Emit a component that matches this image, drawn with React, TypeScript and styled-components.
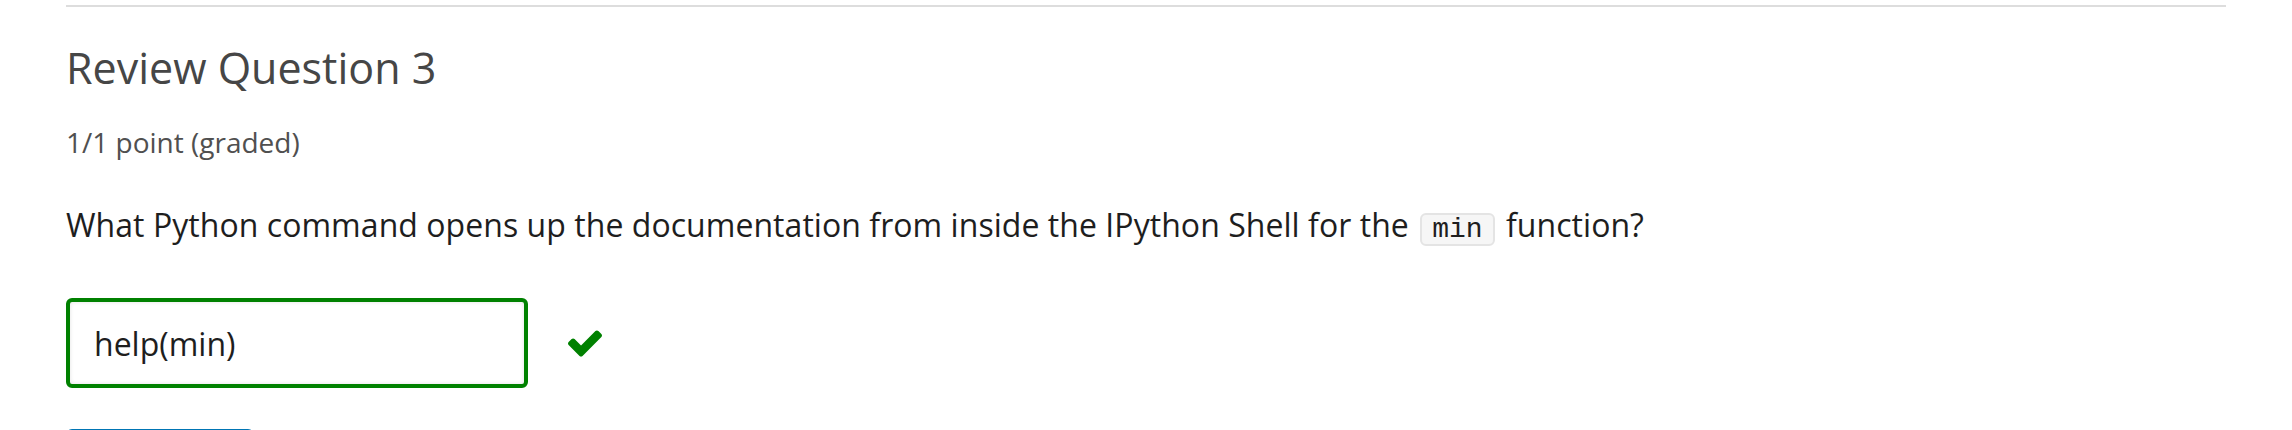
import React from "react";
import styled, { createGlobalStyle } from "styled-components";

const GlobalStyle = createGlobalStyle`
  html, body {
    margin: 0;
    padding: 0;
    background: #fff;
    overflow: hidden;
  }
  body {
    font-family: "Open Sans", "Noto Sans", sans-serif;
  }
`;

const Problem = styled.section`
  width: 2160px;
  margin: 5px 0 0 66px;
  border-top: 2px solid #dddddd;
`;

const Heading = styled.h3`
  margin: 36px 0 0;
  font-size: 43px;
  line-height: 50px;
  font-weight: 400;
  color: #464646;
`;

const Progress = styled.div`
  margin-top: 32px;
  font-size: 28px;
  line-height: 34px;
  color: #505050;
`;

const Prompt = styled.p`
  margin: 46px 0 0;
  font-size: 32px;
  line-height: 40px;
  letter-spacing: 0.05px;
  color: #1e1e1e;
`;

const Code = styled.code`
  display: inline-block;
  margin: 0 3px;
  padding: 0 10px;
  font-family: "Liberation Mono", "DejaVu Sans Mono", monospace;
  font-size: 28px;
  line-height: 29px;
  letter-spacing: 0;
  color: #1e1e1e;
  background: #f6f6f6;
  border: 2px solid #e4e4e4;
  border-radius: 6px;
`;

const AnswerRow = styled.div`
  display: flex;
  align-items: center;
  gap: 40px;
  margin-top: 52px;
`;

const AnswerInput = styled.input`
  box-sizing: border-box;
  width: 462px;
  height: 90px;
  padding: 0 24px;
  font-family: "Open Sans", "Noto Sans", sans-serif;
  font-size: 32px;
  color: #1e1e1e;
  background: #fff;
  border: 4px solid #008100;
  border-radius: 6px;
  box-shadow: inset 0 0 4px rgba(0, 0, 0, 0.12);
  outline: none;
`;

const Check = styled.svg`
  width: 34px;
  height: 27px;
  fill: #008100;
  flex: none;
`;

const SubmitButton = styled.button`
  display: block;
  margin-top: 41px;
  width: 188px;
  height: 80px;
  border: none;
  border-radius: 6px;
  background: #0075b4;
`;

export default function App() {
  return (
    <>
      <GlobalStyle />
      <Problem>
        <Heading>Review Question 3</Heading>
        <Progress>1/1 point (graded)</Progress>
        <Prompt>
          What Python command opens up the documentation from inside the IPython Shell for the{" "}
          <Code>min</Code> function?
        </Prompt>
        <AnswerRow>
          <AnswerInput type="text" defaultValue="help(min)" readOnly />
          <Check viewBox="121 334 1550 1188" aria-label="correct">
            <path d="M1671 566q0 40-28 68l-724 724-136 136q-28 28-68 28t-68-28l-136-136-362-362q-28-28-28-68t28-68l136-136q28-28 68-28t68 28l294 295 656-657q28-28 68-28t68 28l136 136q28 28 28 68z" />
          </Check>
        </AnswerRow>
        <SubmitButton aria-label="Submit" />
      </Problem>
    </>
  );
}
